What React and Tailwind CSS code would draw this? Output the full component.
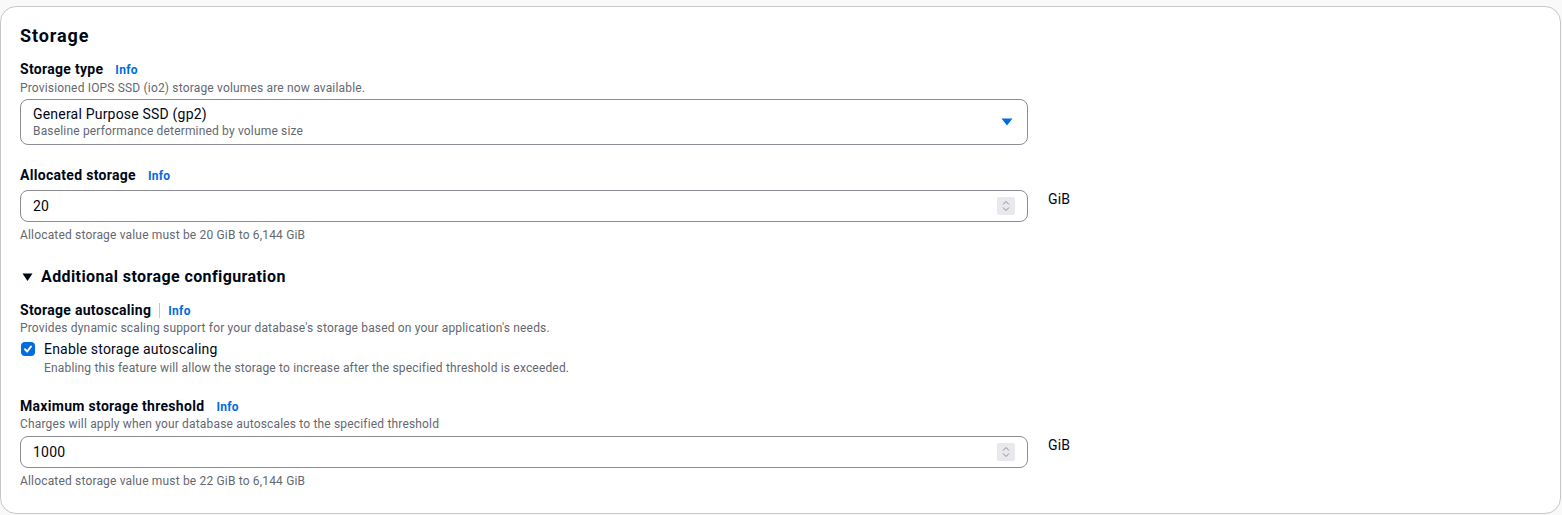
import React from "react";

const font = { fontFamily: "Roboto, 'Noto Sans', Arial, sans-serif" };

function Info() {
  return <span className="text-[12px] leading-[16px] font-bold tracking-[0.3px] text-[#006ce0]">Info</span>;
}

function Spinner() {
  return (
    <div className="absolute right-[12px] top-1/2 -translate-y-1/2 w-[18px] h-[18px] bg-[#e9e9ed] rounded-[2px] flex flex-col items-center justify-center">
      <svg width="12" height="16" viewBox="0 0 12 16" fill="none" stroke="#8a8a93" strokeWidth="1">
        <path d="M3 6.5 L6 3.5 L9 6.5" />
        <path d="M3 9.5 L6 12.5 L9 9.5" />
      </svg>
    </div>
  );
}

function NumberInput({ value }) {
  return (
    <div className="flex items-start">
      <div className="relative w-[1008px] h-[32px] border border-[#8c8c94] rounded-[8px] bg-white flex items-center pl-[12px]">
        <span className="text-[14px] tracking-[0.2px] text-[#000716]">{value}</span>
        <Spinner />
      </div>
      <span className="ml-[20px] text-[14px] leading-[18px] tracking-[0.2px] text-[#000716]">GiB</span>
    </div>
  );
}

const desc = "text-[12px] leading-[16px] tracking-[0.17px] text-[#656871]";
const label = "text-[14px] leading-[18px] font-bold tracking-[0.3px]";

export default function App() {
  return (
    <div className="w-[1562px] h-[515px] bg-[#f9f9f9] pt-[6px] pr-[1px] overflow-hidden" style={font}>
      <div className="h-[508px] bg-white border border-[#c6c6cd] rounded-[16px] pl-[19px] pr-[20px] pt-[18px] text-[#000716]">
        <h2 className="text-[18px] leading-[22px] font-bold tracking-[0.9px]">Storage</h2>

        <div className="mt-[13px] flex items-baseline gap-[12px]">
          <span className={label}>Storage type</span>
          <Info />
        </div>
        <div className={"mt-[2px] " + desc}>
          Provisioned IOPS SSD (io2) storage volumes are now available.
        </div>
        <div className="mt-[3px] w-[1008px] h-[46px] border border-[#8c8c94] rounded-[8px] flex items-center justify-between pl-[12px] pr-[14px]">
          <div className="flex flex-col">
            <span className="text-[14px] leading-[18px] tracking-[0.2px]">General Purpose SSD (gp2)</span>
            <span className={desc}>Baseline performance determined by volume size</span>
          </div>
          <svg width="12" height="8" viewBox="0 0 12 8">
            <path d="M0.5 0.5 L11.5 0.5 L6 7.5 Z" fill="#006ce0" />
          </svg>
        </div>

        <div className="mt-[21px] flex items-baseline gap-[12px]">
          <span className={label}>Allocated storage</span>
          <Info />
        </div>
        <div className="mt-[6px]">
          <NumberInput value="20" />
        </div>
        <div className={"mt-[5px] " + desc}>
          Allocated storage value must be 20 GiB to 6,144 GiB
        </div>

        <div className="mt-[24px] flex items-center gap-[8px]">
          <svg width="11" height="10" viewBox="0 0 11 10" className="ml-[2px]">
            <path d="M0.5 1.5 L10.5 1.5 L5.5 9 Z" fill="#000716" />
          </svg>
          <span className="text-[16px] leading-[20px] font-bold tracking-[0.4px]">Additional storage configuration</span>
        </div>

        <div className="mt-[14px] flex items-center">
          <span className={label}>Storage autoscaling</span>
          <span className="mx-[8px] w-px h-[15px] bg-[#c6c6cd]" />
          <span className="mt-[1px] flex"><Info /></span>
        </div>
        <div className={"mt-[1px] " + desc}>
          Provides dynamic scaling support for your database's storage based on your application's needs.
        </div>
        <div className="mt-[4px] flex items-start gap-[9px]">
          <div className="mt-[2px] ml-[1px] w-[14px] h-[14px] rounded-[4px] bg-[#006ce0] flex items-center justify-center">
            <svg width="10" height="10" viewBox="0 0 10 10" fill="none" stroke="#fff" strokeWidth="2" strokeLinecap="round" strokeLinejoin="round">
              <path d="M2 5.2 L4.2 7.5 L8 2.5" />
            </svg>
          </div>
          <div className="flex flex-col">
            <span className="text-[14px] leading-[18px] tracking-[0.2px]">Enable storage autoscaling</span>
            <span className={"mt-[2px] " + desc}>
              Enabling this feature will allow the storage to increase after the specified threshold is exceeded.
            </span>
          </div>
        </div>

        <div className="mt-[21px] flex items-baseline gap-[12px]">
          <span className={label}>Maximum storage threshold</span>
          <Info />
        </div>
        <div className={"mt-[1px] " + desc}>
          Charges will apply when your database autoscales to the specified threshold
        </div>
        <div className="mt-[4px]">
          <NumberInput value="1000" />
        </div>
        <div className={"mt-[5px] " + desc}>
          Allocated storage value must be 22 GiB to 6,144 GiB
        </div>
      </div>
    </div>
  );
}
